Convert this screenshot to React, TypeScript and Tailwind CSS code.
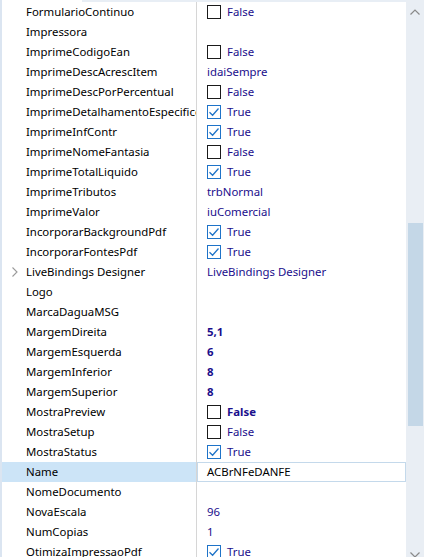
import React from "react";

type Prop = {
  name: string;
  kind?: "bool" | "text" | "edit";
  value?: string;
  checked?: boolean;
  bold?: boolean;
  expand?: boolean;
  selected?: boolean;
};

const props: Prop[] = [
  { name: "FormularioContinuo", kind: "bool", checked: false },
  { name: "Impressora" },
  { name: "ImprimeCodigoEan", kind: "bool", checked: false },
  { name: "ImprimeDescAcrescItem", kind: "text", value: "idaiSempre" },
  { name: "ImprimeDescPorPercentual", kind: "bool", checked: false },
  { name: "ImprimeDetalhamentoEspecifico", kind: "bool", checked: true },
  { name: "ImprimeInfContr", kind: "bool", checked: true },
  { name: "ImprimeNomeFantasia", kind: "bool", checked: false },
  { name: "ImprimeTotalLiquido", kind: "bool", checked: true },
  { name: "ImprimeTributos", kind: "text", value: "trbNormal" },
  { name: "ImprimeValor", kind: "text", value: "iuComercial" },
  { name: "IncorporarBackgroundPdf", kind: "bool", checked: true },
  { name: "IncorporarFontesPdf", kind: "bool", checked: true },
  { name: "LiveBindings Designer", kind: "text", value: "LiveBindings Designer", expand: true },
  { name: "Logo" },
  { name: "MarcaDaguaMSG" },
  { name: "MargemDireita", kind: "text", value: "5,1", bold: true },
  { name: "MargemEsquerda", kind: "text", value: "6", bold: true },
  { name: "MargemInferior", kind: "text", value: "8", bold: true },
  { name: "MargemSuperior", kind: "text", value: "8", bold: true },
  { name: "MostraPreview", kind: "bool", checked: false, bold: true },
  { name: "MostraSetup", kind: "bool", checked: false },
  { name: "MostraStatus", kind: "bool", checked: true },
  { name: "Name", kind: "edit", value: "ACBrNFeDANFE", selected: true },
  { name: "NomeDocumento" },
  { name: "NovaEscala", kind: "text", value: "96" },
  { name: "NumCopias", kind: "text", value: "1" },
  { name: "OtimizaImpressaoPdf", kind: "bool", checked: true },
];

function CheckBox({ checked }: { checked?: boolean }) {
  if (checked) {
    return (
      <span className="w-[14px] h-[14px] border border-[#1e73c8] bg-white flex items-center justify-center shrink-0">
        <svg width="12" height="12" viewBox="0 0 12 12">
          <path d="M1.5 6.2 L4.6 9.2 L10.5 2.5" fill="none" stroke="#1e73c8" strokeWidth="1.3" />
        </svg>
      </span>
    );
  }
  return <span className="w-[14px] h-[14px] border border-[#1a1a1a] bg-white shrink-0" />;
}

function Value({ p }: { p: Prop }) {
  const weight = p.bold ? "font-bold" : "";
  if (p.kind === "bool") {
    return (
      <div className="flex items-center h-full pl-[10px] gap-[6px]">
        <CheckBox checked={p.checked} />
        <span className={`text-[#1a0e8c] ${weight}`}>{p.checked ? "True" : "False"}</span>
      </div>
    );
  }
  if (p.kind === "text") {
    return <div className={`flex items-center h-full pl-[10px] text-[#1a0e8c] ${weight}`}>{p.value}</div>;
  }
  if (p.kind === "edit") {
    return (
      <div className="flex items-center h-full pl-[9px] border border-[#c4d9eb] bg-white text-black">{p.value}</div>
    );
  }
  return null;
}

function Row({ p }: { p: Prop }) {
  return (
    <div className="flex h-[20px] shrink-0">
      <div
        className={`w-[194px] flex items-center whitespace-nowrap overflow-hidden ${
          p.selected ? "bg-[#cce4f7]" : ""
        }`}
      >
        <span className="w-[24px] flex items-center justify-center shrink-0">
          {p.expand && (
            <svg width="8" height="12" viewBox="0 0 8 12" className="ml-[1px]">
              <path d="M1.5 1.5 L6 6 L1.5 10.5" fill="none" stroke="#9a9a9a" strokeWidth="1.1" />
            </svg>
          )}
        </span>
        <span className="text-black">{p.name}</span>
      </div>
      <div className="w-[1px] bg-[#d6d6d6]" />
      <div className="w-[209px] overflow-hidden whitespace-nowrap">
        <Value p={p} />
      </div>
    </div>
  );
}

export default function App() {
  return (
    <div className="w-[424px] h-[557px] overflow-hidden bg-white flex font-['Noto_Sans',sans-serif] text-[11.4px] leading-none">
      <div className="w-[2px] bg-[#dbe5f1] shrink-0" />
      <div className="w-[404px] flex flex-col shrink-0">
        <div className="h-[2px] ml-[80px] bg-[#e8eef5] shrink-0" />
        {props.map((p) => (
          <Row key={p.name} p={p} />
        ))}
      </div>
      <div className="w-[18px] bg-[#e9eef4] flex flex-col items-center shrink-0">
        <svg width="12" height="8" viewBox="0 0 12 8" className="mt-[8px] shrink-0">
          <path d="M1.5 6.5 L6 2 L10.5 6.5" fill="none" stroke="#8a8a8a" strokeWidth="1.2" />
        </svg>
        <div className="w-[15px] h-[203px] mt-[207px] bg-[#c4d7e7] shrink-0" />
        <svg width="12" height="8" viewBox="0 0 12 8" className="mt-[125px] shrink-0">
          <path d="M1.5 1.5 L6 6 L10.5 1.5" fill="none" stroke="#8a8a8a" strokeWidth="1.2" />
        </svg>
      </div>
    </div>
  );
}
